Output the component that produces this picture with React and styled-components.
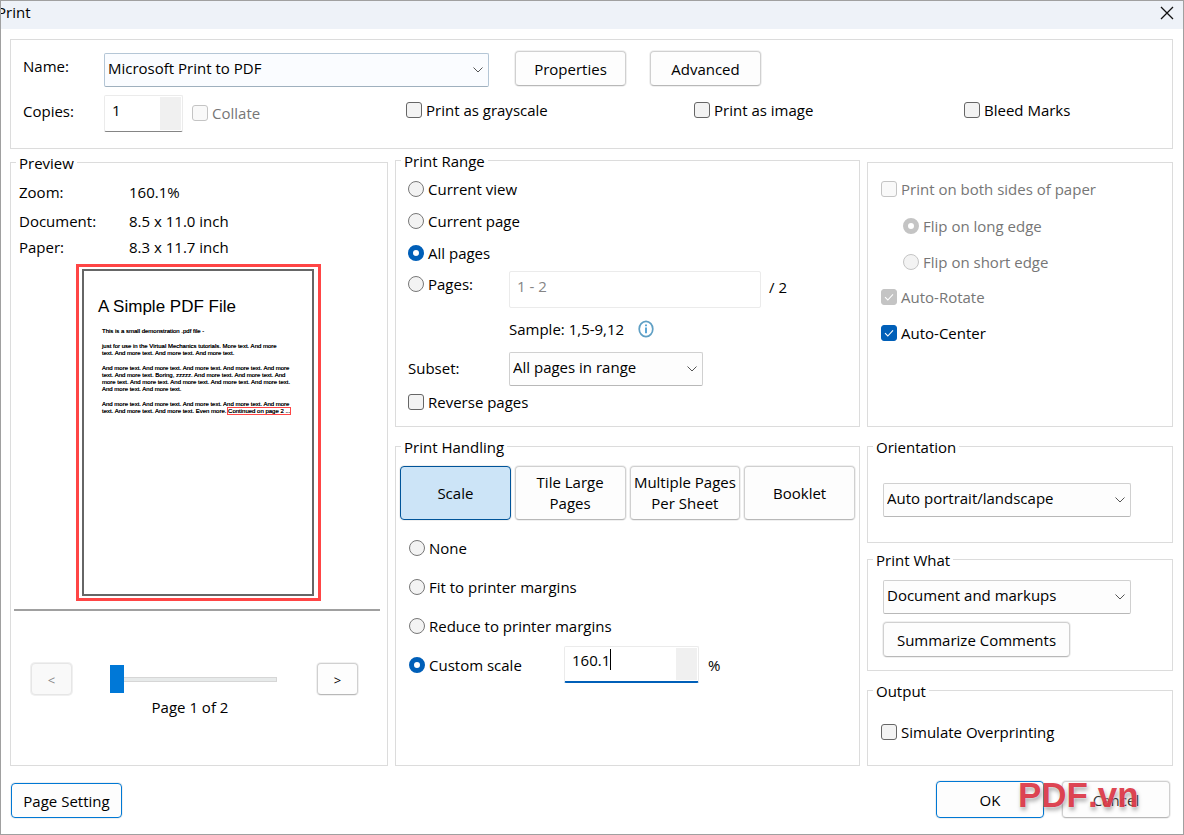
import React, { useState } from 'react';
import styled, { createGlobalStyle, css } from 'styled-components';

const Check = ({ label, muted, on, disabled }) => {
  const [checked, setChecked] = useState(!!on);

  return (
    <Choice $muted={muted}>
      <Mark>
        <Box
          type='checkbox'
          checked={checked}
          disabled={disabled ?? muted}
          onChange={() => setChecked(!checked)}
        />
        {checked && (
          <svg width='16' height='16' viewBox='0 0 16 16' fill='none'>
            <path d='M4 8.2 L6.8 11 L12 5.4' stroke='#fff' strokeWidth='1.1' />
          </svg>
        )}
      </Mark>
      {label}
    </Choice>
  );
};

const Radio = ({ label, name, on, muted }) => (
  <Choice $muted={muted}>
    <Dot type='radio' name={name} defaultChecked={on} disabled={muted} />
    {label}
  </Choice>
);

const Dropdown = ({ id, label, options, accent }) => (
  <SelectWrap>
    <Select id={id} aria-label={label} $accent={accent}>
      {options.map((option) => (
        <option key={option}>{option}</option>
      ))}
    </Select>
    <svg width='10' height='6' viewBox='0 0 10 6' fill='none'>
      <path d='M0.5 0.5 L5 5 L9.5 0.5' stroke='#555' />
    </svg>
  </SelectWrap>
);

const Document = () => (
  <Frame>
    <Paper>
      <h1>A Simple PDF File</h1>
      <p>This is a small demonstration .pdf file -</p>
      <p>
        just for use in the Virtual Mechanics tutorials. More text. And more
        <br />
        text. And more text. And more text. And more text.
      </p>
      <p>
        And more text. And more text. And more text. And more text. And more
        <br />
        text. And more text. Boring, zzzzz. And more text. And more text. And
        <br />
        more text. And more text. And more text. And more text. And more text.
        <br />
        And more text. And more text.
      </p>
      <p>
        And more text. And more text. And more text. And more text. And more
        <br />
        text. And more text. And more text. Even more. <mark>Continued on page 2 ...</mark>
      </p>
    </Paper>
  </Frame>
);

const App = () => (
  <Dialog>
    <GlobalStyle />
    <TitleBar>
      <h2>Print</h2>
      <Close aria-label='Close'>
        <svg width='14' height='14' viewBox='0 0 14 14'>
          <path d='M1 1 L13 13 M13 1 L1 13' stroke='#111' strokeWidth='1.3' />
        </svg>
      </Close>
    </TitleBar>

    <Body>
      <Printer>
        <PrinterRow>
          <label htmlFor='printer'>Name:</label>
          <Dropdown id='printer' accent options={['Microsoft Print to PDF']} />
          <Button>Properties</Button>
          <Button>Advanced</Button>
        </PrinterRow>
        <Options>
          <Copies>
            <label htmlFor='copies'>Copies:</label>
            <Spinner $width='79px'>
              <input id='copies' defaultValue='1' />
              <span />
            </Spinner>
            <Check label='Collate' muted />
          </Copies>
          <Check label='Print as grayscale' />
          <Check label='Print as image' />
          <Check label='Bleed Marks' />
        </Options>
      </Printer>

      <Columns>
        <Column $top='2px'>
          <Group $grow>
            <legend>Preview</legend>
            <Facts>
              <dt>Zoom:</dt>
              <dd>160.1%</dd>
              <dt>Document:</dt>
              <dd>8.5 x 11.0 inch</dd>
              <dt>Paper:</dt>
              <dd>8.3 x 11.7 inch</dd>
            </Facts>
            <Document />
            <Rule />
            <Pager>
              <Button $small disabled>
                &lt;
              </Button>
              <Slider type='range' min='1' max='2' defaultValue='1' aria-label='Page' />
              <Button $small>&gt;</Button>
            </Pager>
            <PageCount>Page 1 of 2</PageCount>
          </Group>
        </Column>

        <Column>
          <Group $height='276px'>
            <legend>Print Range</legend>
            <RangeList>
              <Radio name='range' label='Current view' />
              <Radio name='range' label='Current page' />
              <Radio name='range' label='All pages' on />
            </RangeList>
            <RangeGrid>
              <Radio name='range' label='Pages:' />
              <PagesField>
                <input aria-label='Pages' placeholder='1 - 2' />
                <span>/ 2</span>
              </PagesField>
              <Sample>
                Sample: 1,5-9,12
                <svg width='16' height='18' viewBox='0 0 16 18' fill='none'>
                  <ellipse cx='8' cy='9' rx='6.8' ry='7.6' stroke='#5f9fc4' strokeWidth='1.7' />
                  <path d='M8 4.6 V6.2 M8 7.6 V13.2' stroke='#3f97cf' strokeWidth='1.7' />
                </svg>
              </Sample>
              <label htmlFor='subset'>Subset:</label>
              <Subset>
                <Dropdown id='subset' options={['All pages in range', 'Odd pages', 'Even pages']} />
              </Subset>
              <Check label='Reverse pages' />
            </RangeGrid>
          </Group>

          <Group $grow $spaced>
            <legend>Print Handling</legend>
            <Modes>
              <Button $active>Scale</Button>
              <Button>Tile Large Pages</Button>
              <Button>Multiple Pages Per Sheet</Button>
              <Button>Booklet</Button>
            </Modes>
            <ScaleList>
              <Radio name='scale' label='None' />
              <Radio name='scale' label='Fit to printer margins' />
              <Radio name='scale' label='Reduce to printer margins' />
              <Custom>
                <Radio name='scale' label='Custom scale' on />
                <Spinner $width='135px' $focused>
                  <input aria-label='Scale percent' defaultValue='160.1' />
                  <span />
                  <Caret />
                </Spinner>
                %
              </Custom>
            </ScaleList>
          </Group>
        </Column>

        <Column $top='11px'>
          <Group $height='265px'>
            <Duplex>
              <Check label='Print on both sides of paper' muted />
              <Indent>
                <Radio name='flip' label='Flip on long edge' on muted />
              </Indent>
              <Indent>
                <Radio name='flip' label='Flip on short edge' muted />
              </Indent>
              <Check label='Auto-Rotate' on muted />
              <Check label='Auto-Center' on />
            </Duplex>
          </Group>
          <Group $height='106px' $spaced>
            <legend>Orientation</legend>
            <Stack $top='28px'>
              <Dropdown
                label='Orientation'
                options={['Auto portrait/landscape', 'Portrait', 'Landscape']}
              />
            </Stack>
          </Group>
          <Group $height='121px'>
            <legend>Print What</legend>
            <Stack $top='12px'>
              <Dropdown label='Print what' options={['Document and markups', 'Document']} />
              <Button $wide>Summarize Comments</Button>
            </Stack>
          </Group>
          <Group $grow $spaced>
            <legend>Output</legend>
            <Output>
              <Check label='Simulate Overprinting' />
            </Output>
          </Group>
        </Column>
      </Columns>

      <Footer>
        <Button $outlined>Page Setting</Button>
        <Actions>
          <Button $outlined $tall>
            OK
          </Button>
          <Button $tall $dim>
            Cancel
          </Button>
          <Watermark>PDF.vn</Watermark>
        </Actions>
      </Footer>
    </Body>
  </Dialog>
);

export default App;

const GlobalStyle = createGlobalStyle`
  * {
    box-sizing: border-box;
  }

  body {
    margin: 0;
    color: #000;
    background: #fff;
    font: 15px/20px 'Open Sans', 'Noto Sans', sans-serif;
  }

  button, input, select {
    margin: 0;
    color: inherit;
    font: inherit;
  }

  svg {
    display: block;
  }
`;

const Dialog = styled.div`
  display: flex;
  flex-direction: column;
  min-height: 100vh;
  border: 1px solid #a0a0a0;
  background: #fff;
  overflow: hidden;
`;

const TitleBar = styled.header`
  display: flex;
  justify-content: space-between;
  align-items: center;
  height: 28px;
  padding-right: 9px;
  background: #eef2f8;

  h2 {
    margin: 0 0 0 -4px;
    padding-bottom: 6px;
    font-size: 15px;
    font-weight: 400;
  }
`;

const Close = styled.button`
  padding: 0 0 4px;
  border: 0;
  background: none;
`;

const Body = styled.main`
  flex: 1;
  display: flex;
  flex-direction: column;
  padding: 10px 10px 16px 9px;
`;

const Printer = styled.section`
  height: 110px;
  padding: 10px 11px 0 12px;
  border: 1px solid #dcdcdc;
`;

const SelectWrap = styled.div`
  display: grid;
  align-items: center;
  width: 100%;

  > * {
    grid-area: 1 / 1;
  }

  svg {
    justify-self: end;
    margin-right: 6px;
    pointer-events: none;
  }
`;

const Select = styled.select`
  appearance: none;
  width: 100%;
  height: 34px;
  padding: 0 24px 4px 3px;
  border: 1px solid ${(props) => (props.$accent ? '#b4c6d6' : '#d0d0d0')};
  border-bottom-color: ${(props) => (props.$accent ? '#9fb0be' : '#b8b8b8')};
  border-radius: 2px;
  background: ${(props) => (props.$accent ? '#fafcff' : '#fdfdfd')};
`;

const Button = styled.button`
  width: 111px;
  height: 35px;
  padding: 2px 4px 0;
  border: 1px solid #d0d0d0;
  border-bottom-color: #b8b8b8;
  border-radius: 4px;
  background: #fdfdfd;
  box-shadow: 0 0 0 1px #f0f0f0;
  line-height: 21px;

  &:disabled {
    color: #888;
    border-color: #e6e6e6;
    background: #f9f9f9;
  }

  ${(props) => props.$small && css`
    width: 41px;
    height: 32px;
    font-size: 13px;
  `}

  ${(props) => props.$wide && css`
    width: 187px;
  `}

  ${(props) => props.$tall && css`
    width: 108px;
    height: 37px;
  `}

  ${(props) => props.$outlined && css`
    border-color: #0078d4;
  `}

  ${(props) => props.$active && css`
    border-color: #005499;
    background: #cce4f7;
  `}

  ${(props) => props.$dim && css`
    color: #333;
  `}
`;

const PrinterRow = styled.div`
  display: flex;
  align-items: center;

  label {
    flex: 0 0 81px;
    padding-bottom: 5px;
  }

  ${SelectWrap} {
    flex: 0 1 385px;
    margin: 3px 2px 0 0;
  }

  ${Button} {
    margin-left: 24px;
  }
`;

const Options = styled.div`
  display: grid;
  grid-template-columns: 383fr 288fr 270fr 197fr;
  margin-top: 8px;

  > label {
    height: 30px;
  }
`;

const Copies = styled.div`
  display: flex;
  align-items: center;

  > label:first-child {
    flex: 0 0 81px;
    padding-bottom: 6px;
  }

  > label:last-child {
    margin-left: 9px;
    padding-bottom: 2px;
  }
`;

const Choice = styled.label`
  display: flex;
  align-items: center;
  gap: 4px;
  color: ${(props) => (props.$muted ? '#767676' : 'inherit')};
  white-space: nowrap;
`;

const Mark = styled.span`
  display: grid;

  > * {
    grid-area: 1 / 1;
  }

  svg {
    pointer-events: none;
  }
`;

const Box = styled.input`
  appearance: none;
  width: 16px;
  height: 16px;
  border: 1px solid #666;
  border-radius: 3px;
  background: #f3f3f3;

  &:checked {
    border-color: #005fb8;
    background: #005fb8;
  }

  &:disabled {
    border-color: #c4c4c4;
    background: #f9f9f9;
  }

  &:disabled:checked {
    background: #c4c4c4;
  }
`;

const Dot = styled.input`
  appearance: none;
  width: 16px;
  height: 16px;
  border: 1px solid #777;
  border-radius: 50%;
  background: #f3f3f3;

  &:checked {
    border: 5px solid #005fb8;
    background: #fff;
  }

  &:disabled {
    border-color: #c4c4c4;
  }
`;

const Spinner = styled.div`
  position: relative;
  display: flex;
  width: ${(props) => props.$width};
  height: 37px;
  border: 1px solid #ebebeb;
  border-bottom: ${(props) => (props.$focused ? '2px solid #005fb8' : '1px solid #858585')};
  border-radius: 2px;

  input {
    flex: 1;
    min-width: 0;
    padding: 0 0 8px 7px;
    border: 0;
    outline: 0;
    background: none;
  }

  span {
    width: 21px;
    margin: 1px;
    background: #f0f0f0;
  }
`;

const Caret = styled.i`
  position: absolute;
  top: 2px;
  left: 45px;
  width: 1px;
  height: 21px;
  background: #000;
`;

const Columns = styled.div`
  flex: 1;
  display: grid;
  grid-template-columns: 378fr 465fr 306fr;
  gap: 7px;
  margin-top: 2px;
`;

const Column = styled.div`
  display: flex;
  flex-direction: column;
  gap: 7px;
  min-width: 0;
  padding-top: ${(props) => props.$top || 0};
`;

const Group = styled.fieldset`
  flex: ${(props) => (props.$grow ? '1 0 auto' : 'none')};
  min-width: 0;
  min-height: ${(props) => props.$height || 'auto'};
  margin: ${(props) => (props.$spaced ? '3px' : 0)} 0 0;
  padding: 0;
  border: 1px solid #dcdcdc;

  legend {
    height: 18px;
    margin-left: 5px;
    padding: 0 3px;
  }
`;

const Facts = styled.dl`
  display: grid;
  grid-template-columns: 110px 1fr;
  grid-template-rows: 29px 29px 24px;
  align-items: center;
  margin: 6px 0 5px;
  padding-left: 8px;

  dd {
    margin: 0;
  }
`;

const Frame = styled.div`
  width: 245px;
  height: 337px;
  margin: 0 auto 0 65px;
  padding: 2px 4px 2px 3px;
  border: 3px solid #ff4545;
`;

const Paper = styled.article`
  height: 100%;
  padding: 26px 0 0 18px;
  border: 2px solid #666;
  font-family: 'Liberation Sans', Arial, sans-serif;
  font-size: 6px;
  line-height: 7px;
  white-space: nowrap;

  h1 {
    margin: 0 0 11px -4px;
    font-size: 17px;
    font-weight: 400;
    line-height: 20px;
  }

  p {
    margin: 0 0 8px;
    text-shadow: 0 0 0 #000;
  }

  mark {
    color: inherit;
    background: none;
    outline: 1px solid #ff4545;
  }
`;

const Rule = styled.hr`
  height: 2px;
  margin: 8px 7px 0 3px;
  border: 0;
  background: #a0a0a0;
`;

const Pager = styled.div`
  display: flex;
  align-items: center;
  margin: 52px 29px 0 20px;
`;

const Slider = styled.input`
  appearance: none;
  flex: 1;
  min-width: 0;
  height: 28px;
  margin: 0 40px 0 38px;
  background: none;

  &::-webkit-slider-runnable-track {
    height: 5px;
    border: 1px solid #d6d6d6;
    background: #e7eaea;
  }

  &::-webkit-slider-thumb {
    appearance: none;
    width: 14px;
    height: 28px;
    margin: -13px 0 0 -1px;
    background: #0078d7;
  }
`;

const PageCount = styled.div`
  margin-top: 2px;
  padding: 0 29px 0 11px;
  text-align: center;
`;

const RangeList = styled.div`
  display: grid;
  grid-auto-rows: 32px;
  margin-top: 4px;
  padding-left: 12px;
`;

const RangeGrid = styled.div`
  display: grid;
  grid-template-columns: 101px 1fr;
  grid-template-rows: 37px 44px 34px 32px;
  align-items: center;
  padding: 2px 12px 0;

  > ${Choice}:first-child {
    padding-bottom: 12px;
  }

  > label[for] {
    padding-bottom: 2px;
  }
`;

const PagesField = styled.div`
  display: flex;
  align-items: center;
  gap: 8px;

  input {
    flex: 0 1 252px;
    min-width: 0;
    height: 37px;
    padding: 0 7px 8px;
    border: 1px solid #ebebeb;
    border-radius: 2px;
  }

  input::placeholder {
    color: #858585;
  }

  span {
    padding-bottom: 5px;
  }
`;

const Sample = styled.div`
  grid-column: 2;
  display: flex;
  align-items: center;
  gap: 14px;
  padding-bottom: 3px;
`;

const Subset = styled.div`
  max-width: 194px;
`;

const Modes = styled.div`
  display: grid;
  grid-template-columns: repeat(4, 1fr);
  gap: 4px;
  padding: 11px 4px 0;

  ${Button} {
    width: 100%;
    height: 54px;
    padding: 0;
  }
`;

const ScaleList = styled.div`
  display: grid;
  grid-auto-rows: 39px;
  margin-top: 8px;
  padding-left: 13px;
`;

const Custom = styled.div`
  display: flex;
  align-items: center;

  ${Choice} {
    width: 155px;
  }

  ${Spinner} {
    margin-right: 9px;
  }
`;

const Duplex = styled.div`
  display: grid;
  grid-template-rows: 37px 37px 36px 34px 37px;
  align-items: center;
  padding: 7px 13px;
`;

const Indent = styled.div`
  padding-left: 22px;
`;

const Stack = styled.div`
  display: flex;
  flex-direction: column;
  gap: 8px;
  padding: ${(props) => props.$top} 41px 0 15px;
`;

const Output = styled.div`
  padding: 23px 13px 0;
`;

const Footer = styled.footer`
  display: flex;
  justify-content: space-between;
  align-items: flex-end;
  margin-top: 15px;
  padding: 0 3px 0 1px;
`;

const Actions = styled.div`
  position: relative;
  display: flex;
  gap: 18px;
`;

const Watermark = styled.strong`
  position: absolute;
  top: -6px;
  left: 82px;
  color: rgba(215, 20, 38, 0.8);
  font: 700 35px/40px 'Liberation Sans', Arial, sans-serif;
  font-kerning: none;
  text-shadow: 0 0 2px rgba(255, 255, 255, 0.8), 1px 3px 4px rgba(0, 0, 0, 0.35);
  pointer-events: none;
`;
